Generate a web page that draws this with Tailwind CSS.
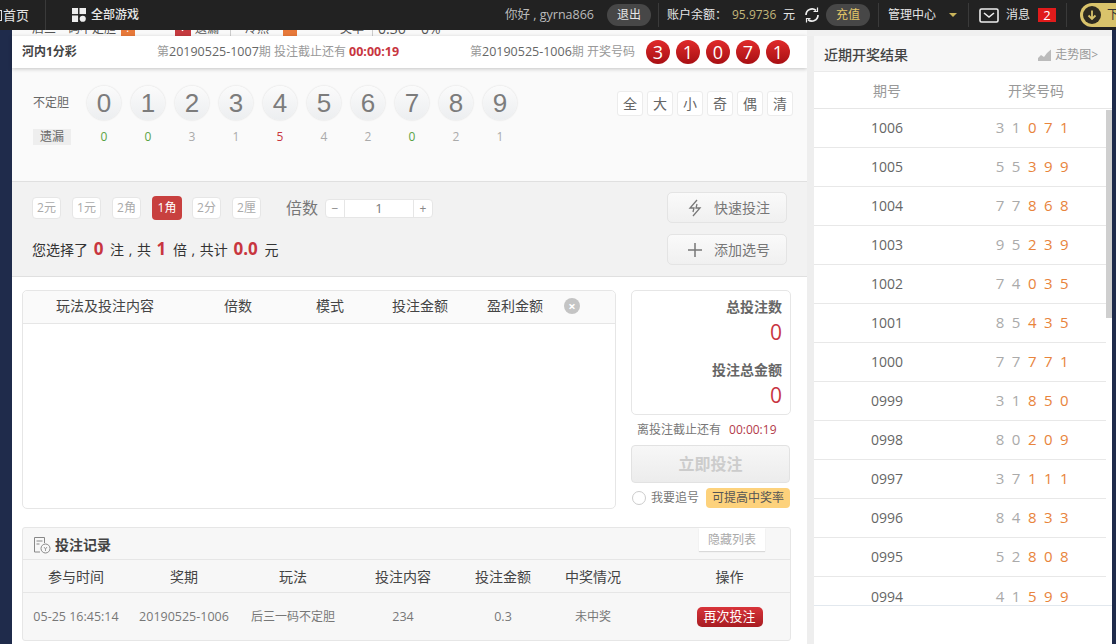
<!doctype html>
<html lang="zh"><head><meta charset="utf-8"><script src="https://cdn.jsdelivr.net/npm/@tailwindcss/browser@4"></script></head>
<body class="m-0">
<div class="w-[1116px] h-[644px] overflow-hidden bg-[#1f2b4b] flex flex-col text-[13px] text-[#666] font-['Open_Sans','Noto_Sans_CJK_SC',sans-serif]">
  <!-- top bar -->
  <header class="h-[30px] shrink-0 bg-[#222] flex items-center text-[#e6e6e6] text-[12px] leading-none whitespace-nowrap overflow-hidden">
    <span class="w-[46px] h-[30px] flex items-center border-r border-[#3a3a3a] shrink-0 text-[13px]"><span class="w-[2px] h-[11px] border-r border-y border-[#ddd] shrink-0"></span><span class="ml-[1px]">首页</span></span>
    <svg class="ml-[26px] w-[14px] h-[14px] shrink-0" viewBox="0 0 15 15" fill="#eee"><rect width="6.5" height="6.5"/><rect x="8" width="7" height="6.5"/><rect y="8" width="6.5" height="7"/><circle cx="11.5" cy="11.5" r="3.3"/></svg>
    <span class="ml-[5px] w-[48px] shrink-0 font-medium">全部游戏</span>
    <span class="ml-[366px] w-[90px] shrink-0 text-[#bbb] text-[12.5px]">你好 , gyrna866</span>
    <span class="ml-[12px] w-[44px] h-[22px] shrink-0 rounded-full bg-[#474747] flex items-center justify-center">退出</span>
    <span class="ml-[7px] h-[24px] shrink-0 border-l border-[#3a3a3a]"></span>
    <span class="ml-[8px] w-[65px] shrink-0">账户余额：</span>
    <span class="w-[47px] shrink-0 text-[#c2b77a]">95.9736</span>
    <span class="ml-[4px] w-[13px] shrink-0">元</span>
    <svg class="ml-[7px] w-[18px] h-[18px] shrink-0" viewBox="0 0 18 18" fill="none" stroke="#eee" stroke-width="1.7"><path d="M3 9a6 6 0 0 1 10-4.500M15 9a6 6 0 0 1-10 4.500"/><path d="M14.500 1.500v4h-4M3.500 16.500v-4h4" stroke-width="1.200"/></svg>
    <span class="ml-[5px] w-[44px] h-[22px] shrink-0 rounded-full bg-[#474747] text-[#e3c667] flex items-center justify-center">充值</span>
    <span class="ml-[8px] h-[24px] shrink-0 border-l border-[#3a3a3a]"></span>
    <span class="ml-[9px] w-[52px] shrink-0">管理中心</span>
    <span class="ml-[9px] w-0 h-0 shrink-0 border-x-[4px] border-x-transparent border-t-[4px] border-t-[#c9b45a]"></span>
    <span class="ml-[11px] h-[24px] shrink-0 border-l border-[#3a3a3a]"></span>
    <svg class="ml-[10px] w-[20px] h-[15px] shrink-0" viewBox="0 0 20 15" fill="none" stroke="#eee" stroke-width="1.600"><rect x="1" y="1" width="18" height="13" rx="1.500"/><path d="M5 5l5 4 5-4"/></svg>
    <span class="ml-[7px] w-[26px] shrink-0">消息</span>
    <span class="ml-[6px] w-[18px] h-[14px] shrink-0 bg-[#e01b1b] text-white flex items-center justify-center text-[13px]">2</span>
    <span class="ml-[10px] h-[24px] shrink-0 border-l border-[#3a3a3a]"></span>
    <span class="ml-[13px] w-[50px] h-[24px] shrink-0 rounded-full bg-[#d9c36b] flex items-center pl-[3px] gap-[6px] text-[#333]">
      <span class="w-[18px] h-[18px] rounded-full bg-[#2d2a20] flex items-center justify-center shrink-0">
        <svg class="w-[10px] h-[10px]" viewBox="0 0 10 10" fill="none" stroke="#d9c36b" stroke-width="1.800"><path d="M5 0.500v8M1.500 5.500L5 9l3.500-3.500"/></svg>
      </span>下载
    </span>
  </header>

  <div class="flex-1 min-h-0 flex pl-[12px] pr-[4px]">
    <!-- main column -->
    <main class="w-[795px] shrink-0 bg-white flex flex-col relative">
      <div class="h-[6px] overflow-hidden bg-[#f9f9f9] whitespace-nowrap">
        <div class="-mt-[9px] flex items-center h-[16px] pl-[20px] text-[12px] text-[#555] leading-none">
          <span class="w-[84px] shrink-0">后三一码不定胆</span><span class="ml-[5px] w-[14px] h-[14px] shrink-0 bg-[#e8793a] text-white text-[11px] text-center">?</span>
          <span class="ml-[40px] w-[16px] h-[16px] shrink-0 bg-[#c53a3f] flex items-center justify-center"><svg class="w-[12px] h-[12px] mt-[2px]" viewBox="0 0 12 12" fill="none" stroke="#fff" stroke-width="1.800"><path d="M1.500 2l4 4 5-5"/></svg></span><span class="ml-[4px] w-[24px] shrink-0">遗漏</span>
          <span class="ml-[11px] border-l border-[#ccc] h-[16px] shrink-0"></span>
          <span class="ml-[14px] w-[24px] shrink-0">冷热</span><span class="ml-[14px] w-[14px] h-[14px] shrink-0 bg-[#e8793a]"></span>
          <span class="ml-[43px] w-[24px] shrink-0">奖率</span><span class="ml-[8px] border-l border-[#ccc] pl-[5px] text-[14px] shrink-0">0.36 ~ 0%</span>
        </div>
      </div>
      <div class="h-[32px] shrink-0 bg-white shadow-[0_1px_4px_rgba(0,0,0,0.22)] relative flex items-center pl-[10px] text-[12px] whitespace-nowrap">
        <span class="font-bold text-[#444] w-[135px] shrink-0">河内1分彩</span>
        <span class="w-[313px] shrink-0 text-[#999]">第<span class="text-[#666] text-[12.5px]">20190525-1007</span>期 投注截止还有 <b class="text-[#c8363f] text-[12.500px]">00:00:19</b></span>
        <span class="w-[166px] shrink-0 text-[#999]">第<span class="text-[#666] text-[12.5px]">20190525-1006</span>期 开奖号码</span>
        <div class="ml-[10px] flex gap-[6px]">
          <span class="w-[24px] h-[24px] rounded-full bg-gradient-to-b from-[#e02a2a] to-[#a80f14] text-white text-[18px] flex items-center justify-center">3</span>
          <span class="w-[24px] h-[24px] rounded-full bg-gradient-to-b from-[#e02a2a] to-[#a80f14] text-white text-[18px] flex items-center justify-center">1</span>
          <span class="w-[24px] h-[24px] rounded-full bg-gradient-to-b from-[#e02a2a] to-[#a80f14] text-white text-[18px] flex items-center justify-center">0</span>
          <span class="w-[24px] h-[24px] rounded-full bg-gradient-to-b from-[#e02a2a] to-[#a80f14] text-white text-[18px] flex items-center justify-center">7</span>
          <span class="w-[24px] h-[24px] rounded-full bg-gradient-to-b from-[#e02a2a] to-[#a80f14] text-white text-[18px] flex items-center justify-center">1</span>
        </div>
      </div>

      <!-- pick area -->
      <section class="h-[113px] shrink-0 bg-[#fafafa] pt-[18px] pl-[21px] pr-[14px]">
        <div class="flex items-center h-[34px]">
          <span class="w-[54px] text-[12px] text-[#666]">不定胆</span>
          <div class="flex gap-[10px] font-['Liberation_Sans',sans-serif] text-[26px] text-[#7c7c7c] leading-none">
            <span class="w-[34px] h-[34px] rounded-full bg-gradient-to-b from-[#fbfbfb] to-[#eceef0] shadow-[0_0_2px_rgba(0,0,0,0.16)] flex items-center justify-center">0</span>
            <span class="w-[34px] h-[34px] rounded-full bg-gradient-to-b from-[#fbfbfb] to-[#eceef0] shadow-[0_0_2px_rgba(0,0,0,0.16)] flex items-center justify-center">1</span>
            <span class="w-[34px] h-[34px] rounded-full bg-gradient-to-b from-[#fbfbfb] to-[#eceef0] shadow-[0_0_2px_rgba(0,0,0,0.16)] flex items-center justify-center">2</span>
            <span class="w-[34px] h-[34px] rounded-full bg-gradient-to-b from-[#fbfbfb] to-[#eceef0] shadow-[0_0_2px_rgba(0,0,0,0.16)] flex items-center justify-center">3</span>
            <span class="w-[34px] h-[34px] rounded-full bg-gradient-to-b from-[#fbfbfb] to-[#eceef0] shadow-[0_0_2px_rgba(0,0,0,0.16)] flex items-center justify-center">4</span>
            <span class="w-[34px] h-[34px] rounded-full bg-gradient-to-b from-[#fbfbfb] to-[#eceef0] shadow-[0_0_2px_rgba(0,0,0,0.16)] flex items-center justify-center">5</span>
            <span class="w-[34px] h-[34px] rounded-full bg-gradient-to-b from-[#fbfbfb] to-[#eceef0] shadow-[0_0_2px_rgba(0,0,0,0.16)] flex items-center justify-center">6</span>
            <span class="w-[34px] h-[34px] rounded-full bg-gradient-to-b from-[#fbfbfb] to-[#eceef0] shadow-[0_0_2px_rgba(0,0,0,0.16)] flex items-center justify-center">7</span>
            <span class="w-[34px] h-[34px] rounded-full bg-gradient-to-b from-[#fbfbfb] to-[#eceef0] shadow-[0_0_2px_rgba(0,0,0,0.16)] flex items-center justify-center">8</span>
            <span class="w-[34px] h-[34px] rounded-full bg-gradient-to-b from-[#fbfbfb] to-[#eceef0] shadow-[0_0_2px_rgba(0,0,0,0.16)] flex items-center justify-center">9</span>
          </div>
          <div class="ml-auto flex gap-[4px] text-[#666] text-[14px]">
            <span class="w-[26px] h-[25px] bg-white border border-[#ececec] rounded-[3px] flex items-center justify-center">全</span>
            <span class="w-[26px] h-[25px] bg-white border border-[#ececec] rounded-[3px] flex items-center justify-center">大</span>
            <span class="w-[26px] h-[25px] bg-white border border-[#ececec] rounded-[3px] flex items-center justify-center">小</span>
            <span class="w-[26px] h-[25px] bg-white border border-[#ececec] rounded-[3px] flex items-center justify-center">奇</span>
            <span class="w-[26px] h-[25px] bg-white border border-[#ececec] rounded-[3px] flex items-center justify-center">偶</span>
            <span class="w-[26px] h-[25px] bg-white border border-[#ececec] rounded-[3px] flex items-center justify-center">清</span>
          </div>
        </div>
        <div class="flex items-center mt-[9px] h-[16px] text-[12px]">
          <span class="w-[38px] h-[16px] bg-[#eee] text-[#666] flex items-center justify-center">遗漏</span>
          <div class="ml-[16px] flex gap-[10px]">
            <span class="w-[34px] text-center text-[#5aa344]">0</span>
            <span class="w-[34px] text-center text-[#5aa344]">0</span>
            <span class="w-[34px] text-center text-[#aaa]">3</span>
            <span class="w-[34px] text-center text-[#aaa]">1</span>
            <span class="w-[34px] text-center text-[#c8363f]">5</span>
            <span class="w-[34px] text-center text-[#aaa]">4</span>
            <span class="w-[34px] text-center text-[#aaa]">2</span>
            <span class="w-[34px] text-center text-[#5aa344]">0</span>
            <span class="w-[34px] text-center text-[#aaa]">2</span>
            <span class="w-[34px] text-center text-[#aaa]">1</span>
          </div>
        </div>
      </section>

      <!-- controls -->
      <section class="h-[96px] shrink-0 bg-[#f2f2f2] border-y border-[#e0e0e0] pl-[20px] pr-[20px] flex justify-between">
        <div class="pt-[15px]">
          <div class="flex items-center h-[22px] text-[12px] text-[#aaa]">
            <span class="w-[29px] h-[22px] bg-white border border-[#e6e6e6] rounded-[4px] flex items-center justify-center">2元</span>
            <span class="ml-[11px] w-[29px] h-[22px] bg-white border border-[#e6e6e6] rounded-[4px] flex items-center justify-center">1元</span>
            <span class="ml-[11px] w-[29px] h-[22px] bg-white border border-[#e6e6e6] rounded-[4px] flex items-center justify-center">2角</span>
            <span class="ml-[11px] w-[30px] h-[24px] bg-[#c8403f] text-white rounded-[4px] flex items-center justify-center">1角</span>
            <span class="ml-[10px] w-[29px] h-[22px] bg-white border border-[#e6e6e6] rounded-[4px] flex items-center justify-center">2分</span>
            <span class="ml-[11px] w-[29px] h-[22px] bg-white border border-[#e6e6e6] rounded-[4px] flex items-center justify-center">2厘</span>
            <span class="ml-[25px] text-[16px] text-[#777]">倍数</span>
            <div class="ml-[7px] w-[108px] h-[19px] bg-white border border-[#e6e6e6] rounded-[4px] flex items-center text-[#888]">
              <span class="w-[19px] text-center border-r border-[#e6e6e6] leading-[17px]">−</span>
              <span class="flex-1 text-center text-[13px] text-[#777] leading-[17px]">1</span>
              <span class="w-[19px] text-center border-l border-[#e6e6e6] leading-[17px]">+</span>
            </div>
          </div>
          <p class="mt-[20px] text-[14px] text-[#333] flex items-center h-[20px] whitespace-pre">您选择了 <b class="text-[17px] text-[#c8363f] ml-[2px] mr-[3px]">0</b> 注<span class="mx-[1px]"> , </span>共 <b class="text-[17px] text-[#c8363f] ml-[2px] mr-[3px]">1</b> 倍<span class="mx-[1px]"> , </span>共计 <b class="text-[17px] text-[#c8363f] ml-[2px] mr-[3px]">0.0</b> 元</p>
        </div>
        <div class="pt-[10px] flex flex-col gap-[11px]">
          <button class="w-[120px] h-[31px] pl-[4px] rounded-[5px] border border-[#e4e4e4] bg-gradient-to-b from-[#fafafa] to-[#f0f0f0] flex items-center justify-center gap-[12px] text-[14px] text-[#777]">
            <svg class="w-[14px] h-[18px]" viewBox="0 0 14 18" fill="none" stroke="#777" stroke-width="1.300"><path d="M9 1L2 9h4l-1 4 M5 17l7-8H8l1-4"/></svg>快速投注</button>
          <button class="w-[120px] h-[31px] pl-[4px] rounded-[5px] border border-[#e4e4e4] bg-gradient-to-b from-[#fafafa] to-[#f0f0f0] flex items-center justify-center gap-[12px] text-[14px] text-[#777]">
            <svg class="w-[14px] h-[14px]" viewBox="0 0 14 14" stroke="#777" stroke-width="1.500"><path d="M7 0v14M0 7h14"/></svg>添加选号</button>
        </div>
      </section>

      <!-- cart -->
      <section class="flex-1 min-h-0 bg-white pl-[10px] pr-[16px] pt-[13px]">
        <div class="flex gap-[15px]">
          <div class="w-[594px] h-[219px] border border-[#e6e6e6] rounded-[5px] text-[14px] text-[#444]">
            <div class="h-[33px] pb-[3px] bg-[#fafafa] border-b border-[#e6e6e6] rounded-t-[5px] grid grid-cols-[164px_102px_82px_98px_92px_23px] items-center text-center">
              <span>玩法及投注内容</span><span>倍数</span><span>模式</span><span>投注金额</span><span>盈利金额</span>
              <span class="ml-[3px] w-[16px] h-[16px] rounded-full bg-[#c4c4c4] text-white text-[13px] leading-[16px] font-bold">×</span>
            </div>
          </div>
          <div class="w-[160px] flex flex-col">
            <div class="h-[125px] border border-[#e6e6e6] rounded-[5px] text-right pr-[8px] pt-[7px] text-[14px] font-bold text-[#666] leading-[18px]">
              <div>总投注数</div>
              <div class="text-[21px] font-normal text-[#c8363f] leading-[26px] mt-[3px]">0</div>
              <div class="mt-[16px]">投注总金额</div>
              <div class="text-[21px] font-normal text-[#c8363f] leading-[26px] mt-[3px]">0</div>
            </div>
            <div class="h-[30px] flex items-center pl-[6px] text-[12px] text-[#777] whitespace-nowrap">离投注截止还有<span class="ml-[8px] text-[#b33a4a]">00:00:19</span></div>
            <button class="h-[38px] mr-[1px] rounded-[4px] border border-[#e2e2e2] bg-gradient-to-b from-[#f7f7f7] to-[#ececec] text-[16px] font-bold text-[#ccc]">立即投注</button>
            <div class="mt-[5px] flex items-center text-[12px] text-[#777] whitespace-nowrap h-[20px]">
              <span class="ml-[1px] w-[14px] h-[14px] rounded-full bg-white border border-[#ccc] shrink-0"></span>
              <span class="ml-[5px] w-[48px] shrink-0">我要追号</span>
              <span class="ml-[7px] w-[84px] h-[20px] shrink-0 rounded-[4px] bg-[#fdd27c] text-[#555] flex items-center justify-center">可提高中奖率</span>
            </div>
          </div>
        </div>
        <!-- records -->
        <div class="mt-[18px] w-[769px] h-[114px] bg-[#f7f7f7] border border-[#e6e6e6] rounded-[3px] text-[#444] whitespace-nowrap">
          <div class="h-[32px] flex items-center pl-[10px] pt-[2px] border-b border-[#e6e6e6] relative">
            <svg class="w-[18px] h-[18px]" viewBox="0 0 18 18" fill="none" stroke="#888" stroke-width="1"><path d="M7 16H1.500V1.500h10V7M3.500 5h6M3.500 8h3"/><circle cx="12.500" cy="12.500" r="4.500"/><path d="M11 11l1.500 2 1.500-2M12.500 13v2" stroke-width="0.800"/></svg>
            <b class="ml-[4px] text-[14px]">投注记录</b>
            <span class="absolute right-[25px] top-[0px] w-[66px] h-[23px] bg-white shadow-[0_1px_1px_rgba(0,0,0,0.12)] text-[12px] text-[#aaa] flex items-center justify-center">隐藏列表</span>
          </div>
          <div class="h-[33px] grid grid-cols-[106px_110px_108px_112px_88px_92px_151px] items-center text-center text-[14px] border-b border-[#e6e6e6]">
            <span>参与时间</span><span>奖期</span><span>玩法</span><span>投注内容</span><span>投注金额</span><span>中奖情况</span><span class="pl-[30px]">操作</span>
          </div>
          <div class="h-[46px] pt-[2px] grid grid-cols-[106px_110px_108px_112px_88px_92px_151px] items-center text-center text-[12.5px] text-[#777]">
            <span>05-25 16:45:14</span><span>20190525-1006</span><span class="text-[12px]">后三一码不定胆</span><span>234</span><span>0.3</span><span class="text-[12px]">未中奖</span>
            <span class="pl-[30px] flex justify-center"><span class="w-[66px] h-[20px] rounded-[5px] bg-gradient-to-b from-[#d8343a] to-[#a81d22] text-white text-[13px] flex items-center justify-center">再次投注</span></span>
          </div>
        </div>
      </section>
    </main>

    <!-- gutter + right panel -->
    <aside class="w-[305px] shrink-0 flex flex-col relative">
      <div class="h-[6px] bg-[#f0f0f0]"></div>
      <div class="flex-1 min-h-0 flex bg-white">
        <div class="w-[7px] shrink-0 bg-[#eeeeee]"></div>
        <div class="flex-1 min-w-0 relative">
          <div class="h-[36px] pt-[2px] bg-[#f7f7f7] flex items-center pl-[10px] pr-[14px] justify-between border-b border-[#eaeaea]">
            <b class="text-[14px] text-[#444] font-medium">近期开奖结果</b>
            <span class="flex items-center gap-[3px] text-[12px] text-[#999]">
              <svg class="w-[14px] h-[12px]" viewBox="0 0 14 12" fill="#bbb"><path d="M0 12V9l3-3 3 2 3-4 4-3.500V12z"/></svg>走势图&gt;</span>
          </div>
          <div class="h-[37px] pt-[1px] grid grid-cols-[146px_1fr] items-center text-center text-[14px] text-[#999] border-b border-[#e6e6e6]"><span>期号</span><span>开奖号码</span></div>
          <ul class="text-[14px] text-[#666] h-[497px] overflow-hidden border-b border-[#e2e8ee] pr-[6px]">
            <li class="h-[39px] pb-[1px] grid grid-cols-[146px_1fr] items-center text-center border-b border-[#e8e8e8]"><span>1006</span><span class="pl-[6px] text-[15px] text-[#aaa] tracking-[7.5px]">31<span class="text-[#e8843c]">071</span></span></li>
            <li class="h-[39px] pb-[1px] grid grid-cols-[146px_1fr] items-center text-center border-b border-[#e8e8e8]"><span>1005</span><span class="pl-[6px] text-[15px] text-[#aaa] tracking-[7.5px]">55<span class="text-[#e8843c]">399</span></span></li>
            <li class="h-[39px] pb-[1px] grid grid-cols-[146px_1fr] items-center text-center border-b border-[#e8e8e8]"><span>1004</span><span class="pl-[6px] text-[15px] text-[#aaa] tracking-[7.5px]">77<span class="text-[#e8843c]">868</span></span></li>
            <li class="h-[39px] pb-[1px] grid grid-cols-[146px_1fr] items-center text-center border-b border-[#e8e8e8]"><span>1003</span><span class="pl-[6px] text-[15px] text-[#aaa] tracking-[7.5px]">95<span class="text-[#e8843c]">239</span></span></li>
            <li class="h-[39px] pb-[1px] grid grid-cols-[146px_1fr] items-center text-center border-b border-[#e8e8e8]"><span>1002</span><span class="pl-[6px] text-[15px] text-[#aaa] tracking-[7.5px]">74<span class="text-[#e8843c]">035</span></span></li>
            <li class="h-[39px] pb-[1px] grid grid-cols-[146px_1fr] items-center text-center border-b border-[#e8e8e8]"><span>1001</span><span class="pl-[6px] text-[15px] text-[#aaa] tracking-[7.5px]">85<span class="text-[#e8843c]">435</span></span></li>
            <li class="h-[39px] pb-[1px] grid grid-cols-[146px_1fr] items-center text-center border-b border-[#e8e8e8]"><span>1000</span><span class="pl-[6px] text-[15px] text-[#aaa] tracking-[7.5px]">77<span class="text-[#e8843c]">771</span></span></li>
            <li class="h-[39px] pb-[1px] grid grid-cols-[146px_1fr] items-center text-center border-b border-[#e8e8e8]"><span>0999</span><span class="pl-[6px] text-[15px] text-[#aaa] tracking-[7.5px]">31<span class="text-[#e8843c]">850</span></span></li>
            <li class="h-[39px] pb-[1px] grid grid-cols-[146px_1fr] items-center text-center border-b border-[#e8e8e8]"><span>0998</span><span class="pl-[6px] text-[15px] text-[#aaa] tracking-[7.5px]">80<span class="text-[#e8843c]">209</span></span></li>
            <li class="h-[39px] pb-[1px] grid grid-cols-[146px_1fr] items-center text-center border-b border-[#e8e8e8]"><span>0997</span><span class="pl-[6px] text-[15px] text-[#aaa] tracking-[7.5px]">37<span class="text-[#e8843c]">111</span></span></li>
            <li class="h-[39px] pb-[1px] grid grid-cols-[146px_1fr] items-center text-center border-b border-[#e8e8e8]"><span>0996</span><span class="pl-[6px] text-[15px] text-[#aaa] tracking-[7.5px]">84<span class="text-[#e8843c]">833</span></span></li>
            <li class="h-[39px] pb-[1px] grid grid-cols-[146px_1fr] items-center text-center border-b border-[#e8e8e8]"><span>0995</span><span class="pl-[6px] text-[15px] text-[#aaa] tracking-[7.5px]">52<span class="text-[#e8843c]">808</span></span></li>
            <li class="h-[39px] pb-[1px] grid grid-cols-[146px_1fr] items-center text-center"><span>0994</span><span class="pl-[6px] text-[15px] text-[#aaa] tracking-[7.5px]">41<span class="text-[#e8843c]">599</span></span></li>
          </ul>
          <span class="absolute right-0 top-[74px] w-[6px] h-[208px] bg-[#cfcfcf]"></span>
        </div>
      </div>
    </aside>
  </div>
</div>
</body></html>
